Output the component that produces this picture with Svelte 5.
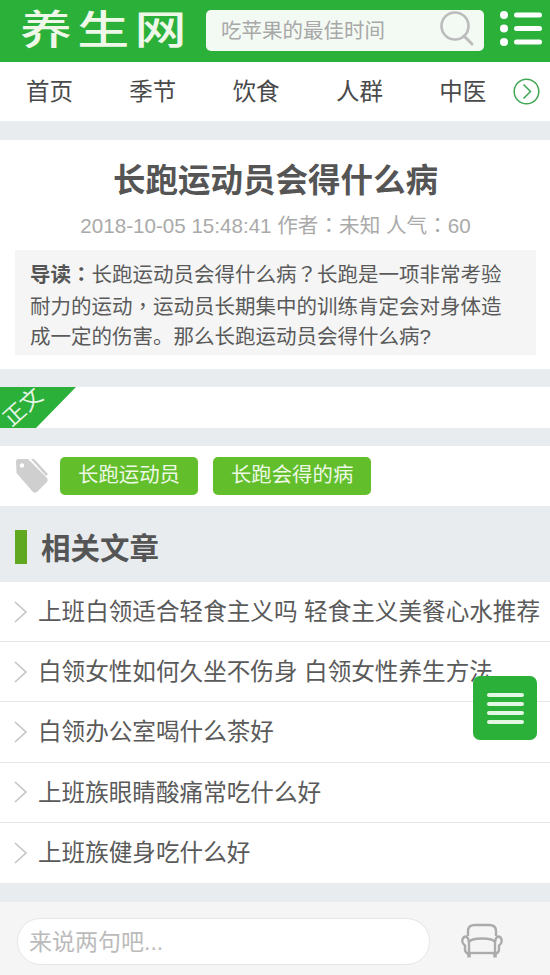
<script>
  const navItems = ["首页", "季节", "饮食", "人群", "中医"];
  const related = [
    "上班白领适合轻食主义吗 轻食主义美餐心水推荐",
    "白领女性如何久坐不伤身 白领女性养生方法",
    "白领办公室喝什么茶好",
    "上班族眼睛酸痛常吃什么好",
    "上班族健身吃什么好"
  ];
  const tags = ["长跑运动员", "长跑会得的病"];
</script>

<div class="page">
  <header class="top">
    <div class="logo-box"><div class="logo">养生网</div></div>
    <div class="search">
      <span class="search-text">吃苹果的最佳时间</span>
      <svg class="search-icon" width="38" height="36" viewBox="0 0 38 36" fill="none" stroke="#bcbcbc">
        <circle cx="16" cy="15" r="13.5" stroke-width="2.6" />
        <path d="M25 25l8 8" stroke-width="3" stroke-linecap="round" />
      </svg>
    </div>
    <svg class="menu-icon" width="42" height="36" viewBox="0 0 42 36" fill="#fff">
      <circle cx="4" cy="5" r="4" />
      <circle cx="4" cy="18.500" r="4" />
      <circle cx="4" cy="32" r="4" />
      <rect x="14" y="2.500" width="28" height="5" rx="2.500" />
      <rect x="14" y="16" width="28" height="5" rx="2.500" />
      <rect x="14" y="29.500" width="28" height="5" rx="2.500" />
    </svg>
  </header>

  <nav class="nav">
    {#each navItems as item}
      <span class="nav-item">{item}</span>
    {/each}
    <svg class="nav-more" width="27" height="27" viewBox="0 0 27 27" fill="none" stroke="#3fa654" stroke-width="1.500">
      <circle cx="13.500" cy="13.500" r="12.300" />
      <path d="M10.500 6.500l7 7-7 7" />
    </svg>
  </nav>

  <section class="article">
    <h1>长跑运动员会得什么病</h1>
    <p class="meta">2018-10-05 15:48:41 作者<span class="tc">：</span>未知 人气<span class="tc">：</span>60</p>
    <div class="intro"><b>导读<span class="tc">：</span></b>长跑运动员会得什么病<span class="tc">？</span>长跑是一项非常考验<br />耐力的运动<span class="tc">，</span>运动员长期集中的训练肯定会对身体造<br />成一定的伤害。那么长跑运动员会得什么病?</div>
  </section>

  <section class="body-bar">
    <div class="ribbon"><span>正文</span></div>
  </section>

  <section class="tags">
    <svg width="34" height="36" viewBox="0 0 34 36" fill="#cfcfcf">
      <path d="M1 3.500Q1 1 3.500 1H13L32 20Q33.500 22 32 24L22 34Q20 35.500 18 34L1.500 15Z" />
      <circle cx="7" cy="7.500" r="2.200" fill="#fff" />
      <path d="M16 1h3l14 15-2 2z" />
    </svg>
    {#each tags as tag}
      <span class="tag">{tag}</span>
    {/each}
  </section>

  <div class="related-head"><i></i><h2>相关文章</h2></div>

  <ul class="related">
    {#each related as title}
      <li>
        <svg width="15" height="22" viewBox="0 0 15 22" fill="none" stroke="#c4c4c4" stroke-width="1.600">
          <path d="M2 1l11 10L2 21" />
        </svg>
        <span>{title}</span>
      </li>
    {/each}
  </ul>

  <div class="comment">
    <div class="comment-input">来说两句吧...</div>
    <svg class="sofa" width="42" height="36" viewBox="0 0 42 36" fill="none" stroke="#ababab" stroke-width="2.400">
      <path d="M7 13V8Q7 2 14 2H28Q35 2 35 8V13" />
      <path d="M8 19Q10 15.500 21 15.500T34 19" />
      <path d="M8 30H34" />
      <path d="M8 31L8 21Q8 14 4.500 13.500 1.500 14 1.200 18 1.500 21 4 22.500V27Q4.500 30 8 31Z" />
      <path d="M34 31L34 21Q34 14 37.500 13.500 40.500 14 40.800 18 40.500 21 38 22.500V27Q37.500 30 34 31Z" />
      <path d="M8 31v3.500M34 31v3.500" stroke-width="3.500" />
    </svg>
  </div>

  <button class="float-menu" aria-label="菜单">
    <i></i><i></i><i></i><i></i>
  </button>
</div>

<style>
  :global(body) {
    margin: 0;
    background: #e8ecee;
  }
  .page {
    position: relative;
    width: 550px;
    height: 975px;
    overflow: hidden;
    background: #e8ecee;
    font-family: "Liberation Sans", "Noto Sans CJK SC", sans-serif;
    color: #555;
  }
  .tc {
    font-family: "Noto Sans CJK TC", sans-serif;
  }
  .top {
    height: 62px;
    box-sizing: border-box;
    background: #2bb03a;
    display: flex;
    align-items: center;
    padding: 0 8px 0 20px;
  }
  .logo-box {
    width: 186px;
    flex: none;
  }
  .logo {
    font-size: 40px;
    line-height: 40px;
    letter-spacing: 4px;
    font-weight: 500;
    white-space: nowrap;
    color: #eef7e8;
    margin-top: -2px;
    transform: scaleX(1.3);
    transform-origin: left center;
  }
  .search {
    width: 278px;
    height: 41px;
    margin-top: -1px;
    border-radius: 5px;
    background: #f3faf3;
    display: flex;
    align-items: center;
    justify-content: space-between;
    box-sizing: border-box;
    padding: 0 7px 0 15px;
  }
  .search-text {
    font-size: 20.500px;
    color: #a8a8a8;
    margin-top: -4px;
  }
  .search-icon {
    margin-top: -3px;
  }
  .menu-icon {
    margin-left: 16px;
    flex: none;
    margin-top: -6px;
  }
  .nav {
    height: 59px;
    background: #fff;
    display: flex;
    align-items: center;
    padding-left: 26px;
    gap: 55.500px;
    position: relative;
  }
  .nav-item {
    font-size: 23.500px;
    width: 48px;
    color: #4a4a4a;
    white-space: nowrap;
    margin-right: -.2px;
    margin-top: -4px;
  }
  .nav-more {
    position: absolute;
    left: 513px;
    top: 16px;
  }
  .article {
    margin-top: 19px;
    height: 229px;
    box-sizing: border-box;
    background: #fff;
    padding: 19px 14px 0 15px;
  }
  h1 {
    margin: 0;
    text-align: center;
    font-size: 32.500px;
    line-height: 44px;
    font-weight: 700;
    color: #555;
  }
  .meta {
    margin: 8px 0 0;
    text-align: center;
    font-size: 20.600px;
    line-height: 26px;
    color: #aaa;
  }
  .intro {
    margin-top: 11px;
    height: 105px;
    box-sizing: border-box;
    background: #f5f5f5;
    padding: 8px 15px 0;
    font-size: 20.500px;
    line-height: 30px;
    color: #5a5a5a;
    white-space: nowrap;
  }
  .intro b {
    color: #555;
  }
  .body-bar {
    margin-top: 18px;
    height: 41px;
    background: #fff;
    overflow: hidden;
  }
  .ribbon {
    width: 76px;
    height: 41px;
    background: #2bb03a;
    clip-path: polygon(0 0, 100% 0, 36px 100%, 0 100%);
    overflow: hidden;
  }
  .ribbon span {
    display: block;
    width: 46px;
    font-size: 22px;
    line-height: 24px;
    color: #e6f5e6;
    white-space: nowrap;
    transform: translate(1px, 8px) rotate(-42deg);
  }
  .tags {
    margin-top: 18px;
    height: 60px;
    background: #fff;
    display: flex;
    align-items: center;
    padding-left: 15px;
    box-sizing: border-box;
  }
  .tags svg {
    margin-right: 11px;
    flex: none;
  }
  .tag {
    height: 38px;
    line-height: 37px;
    padding: 0 18px;
    margin-right: 15px;
    border-radius: 5px;
    background: #62bf2b;
    color: #eef8e6;
    font-size: 20.400px;
    white-space: nowrap;
  }
  .related-head {
    height: 76px;
    display: flex;
    align-items: center;
    padding-left: 15px;
    box-sizing: border-box;
  }
  .related-head i {
    width: 12px;
    height: 34px;
    background: #5fa81f;
    margin-top: 5px;
  }
  h2 {
    margin: 3px 0 0 14px;
    font-size: 29.500px;
    font-weight: 700;
    color: #555;
  }
  .related {
    list-style: none;
    margin: 0;
    padding: 0;
    background: #fff;
  }
  .related li {
    height: 60.200px;
    box-sizing: border-box;
    display: flex;
    align-items: center;
    padding-left: 13px;
    border-bottom: 1px solid #e6e6e6;
    font-size: 23.600px;
    color: #5a5a5a;
    white-space: nowrap;
  }
  .related li:last-child {
    border-bottom: none;
  }
  .related li svg {
    flex: none;
    margin-right: 10px;
  }
  .related li span {
    margin-top: -3px;
  }
  .comment {
    margin-top: 19px;
    height: 73px;
    background: #f5f5f5;
    display: flex;
    align-items: center;
    padding-left: 17px;
  }
  .comment-input {
    width: 413px;
    height: 47px;
    line-height: 46px;
    box-sizing: border-box;
    margin-top: 6px;
    padding-left: 11px;
    background: #fff;
    border: 1px solid #e6e6e6;
    border-radius: 24px;
    font-size: 23px;
    color: #bbb;
  }
  .sofa {
    margin: 6px 0 0 31px;
  }
  .float-menu {
    position: absolute;
    left: 473px;
    top: 676px;
    width: 64px;
    height: 64px;
    border: 0;
    padding: 0;
    border-radius: 7px;
    background: #2bb03a;
    display: flex;
    flex-direction: column;
    align-items: center;
    justify-content: center;
    gap: 5px;
  }
  .float-menu i {
    display: block;
    width: 37px;
    height: 4px;
    border-radius: 2px;
    background: #e4f6e4;
  }
</style>
